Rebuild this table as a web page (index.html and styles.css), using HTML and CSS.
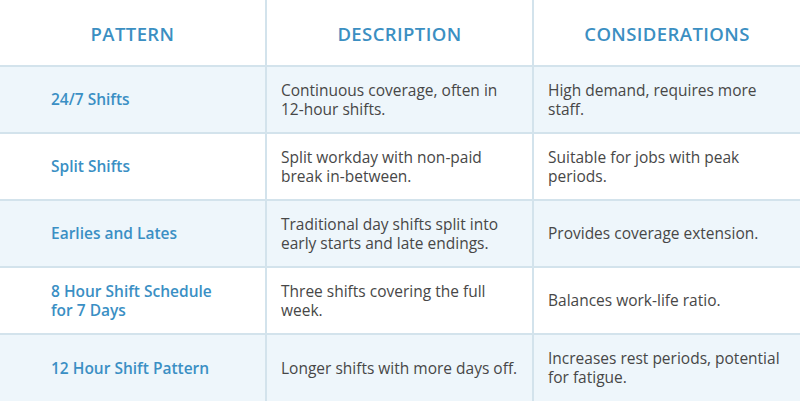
FILE: index.html
```html
<!DOCTYPE html>
<html lang="en">
<head>
<meta charset="utf-8">
<title>Shift Patterns</title>
<link rel="stylesheet" href="styles.css">
</head>
<body>
<div class="table">
  <div class="cell head">PATTERN</div>
  <div class="cell head">DESCRIPTION</div>
  <div class="cell head">CONSIDERATIONS</div>

  <div class="cell name alt"><p>24/7 Shifts</p></div>
  <div class="cell text alt"><p>Continuous coverage, often in 12-&#8288;hour shifts.</p></div>
  <div class="cell text alt"><p>High demand, requires more staff.</p></div>

  <div class="cell name"><p>Split Shifts</p></div>
  <div class="cell text"><p>Split workday with non-&#8288;paid break in-&#8288;between.</p></div>
  <div class="cell text"><p>Suitable for jobs with peak periods.</p></div>

  <div class="cell name alt"><p>Earlies and Lates</p></div>
  <div class="cell text alt"><p>Traditional day shifts split into early starts and late endings.</p></div>
  <div class="cell text alt"><p>Provides coverage extension.</p></div>

  <div class="cell name"><p>8 Hour Shift Schedule for 7 Days</p></div>
  <div class="cell text"><p>Three shifts covering the full week.</p></div>
  <div class="cell text"><p>Balances work-&#8288;life ratio.</p></div>

  <div class="cell name alt"><p>12 Hour Shift Pattern</p></div>
  <div class="cell text alt"><p>Longer shifts with more days off.</p></div>
  <div class="cell text alt"><p>Increases rest periods, potential for fatigue.</p></div>
</div>
</body>
</html>
```
FILE: styles.css
```css
html, body {
  margin: 0;
  padding: 0;
  background: #ffffff;
}
body {
  font-family: "Open Sans", "Liberation Sans", sans-serif;
  width: 800px;
  height: 401px;
  overflow: hidden;
}
.table {
  display: grid;
  grid-template-columns: 265px 265px 266px;
  grid-template-rows: 65px 65px 65px 65px 65px 66px;
  gap: 2px;
  background: #d3e3ec;
  width: 800px;
  height: 401px;
}
.cell {
  background: #ffffff;
  display: flex;
  align-items: center;
  box-sizing: border-box;
}
.cell p {
  margin: 0;
}
.cell.alt {
  background: #eef6fb;
}
.head {
  justify-content: center;
  color: #3b8fc2;
  font-size: 18.5px;
  font-weight: 600;
  letter-spacing: 0.4px;
  padding-top: 1px;
}
.name {
  padding-left: 51px;
  padding-right: 40px;
  color: #3a8fc4;
  font-size: 15.5px;
  font-weight: 600;
  line-height: 19px;
}
.text {
  padding-left: 14px;
  padding-right: 9px;
  color: #474747;
  font-size: 15.5px;
  line-height: 19px;
}
```
